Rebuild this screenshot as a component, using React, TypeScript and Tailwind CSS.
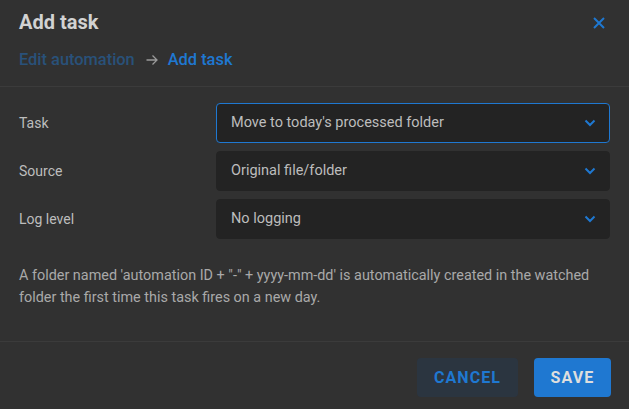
import React from 'react';

function Chevron() {
  return (
    <svg width="12" height="8" viewBox="0 0 12 8" className="shrink-0">
      <path d="M1.5 1.5 L6 6 L10.5 1.5" fill="none" stroke="#1f78d1" strokeWidth="2" />
    </svg>
  );
}

function SelectBox({ value, focused }: { value: string; focused?: boolean }) {
  return (
    <div
      className={
        focused
          ? 'flex h-10 flex-1 items-center justify-between rounded-[4px] border border-[#1f78d1] bg-[#232323] pl-[14px] pr-[13px]'
          : 'flex h-10 flex-1 items-center justify-between rounded-[4px] border border-[#232323] bg-[#232323] pl-[14px] pr-[13px]'
      }
    >
      <span className="text-[14.5px] text-[#bdbdbd]">{value}</span>
      <Chevron />
    </div>
  );
}

const rows = [
  { label: 'Task', value: "Move to today's processed folder", focused: true },
  { label: 'Source', value: 'Original file/folder' },
  { label: 'Log level', value: 'No logging' },
];

export default function App() {
  return (
    <div className="flex h-[409px] w-[629px] flex-col bg-[#313131] font-['Roboto',sans-serif]">
      {/* Header */}
      <div className="h-[86px] px-[19px] pt-[8px]">
        <div className="flex items-center justify-between">
          <h1 className="text-[20px] font-bold leading-[28px] text-[#d2d2d2]">Add task</h1>
          <svg width="12" height="12" viewBox="0 0 12 12" className="mr-[5px] mt-[1px]">
            <path d="M1 1 L11 11 M11 1 L1 11" stroke="#1f78d1" strokeWidth="2" />
          </svg>
        </div>
        <div className="mt-[14px] flex items-center text-[16.4px] font-medium leading-[20px]">
          <span className="text-[#29517a]">Edit automation</span>
          <svg width="12" height="12" viewBox="0 0 12 12" className="ml-[11px] mr-[10px]">
            <path d="M0.5 6 H11 M6.5 1.5 L11 6 L6.5 10.5" fill="none" stroke="#9a9a9a" strokeWidth="1.3" />
          </svg>
          <span className="text-[#1f78d1]">Add task</span>
        </div>
      </div>
      <div className="h-px bg-[#3b3b3b]" />

      {/* Body */}
      <div className="flex h-[254px] flex-col px-[19px] pt-[16px]">
        <div className="flex flex-col gap-[8px]">
          {rows.map((r) => (
            <div key={r.label} className="flex items-center">
              <div className="w-[197px] text-[14px] text-[#bdbdbd]">{r.label}</div>
              <SelectBox value={r.value} focused={r.focused} />
            </div>
          ))}
        </div>
        <p className="mt-[26px] text-[14.4px] leading-[22px] text-[#a9a9a9]">
          A folder named 'automation ID + "-" + yyyy-mm-dd' is automatically created in the watched folder the first time this task fires on a new day.
        </p>
      </div>
      <div className="h-px bg-[#3b3b3b]" />

      {/* Footer */}
      <div className="flex justify-end gap-[16px] px-[18px] pt-[16px]">
        <button className="h-[39px] w-[101px] rounded-[4px] bg-[#2b3540] text-[16px] font-bold tracking-[1.1px] text-[#1f78d1]">
          CANCEL
        </button>
        <button className="h-[39px] w-[77px] rounded-[4px] bg-[#1f78d1] text-[16px] font-bold tracking-[1.1px] text-[#dedede]">
          SAVE
        </button>
      </div>
    </div>
  );
}
